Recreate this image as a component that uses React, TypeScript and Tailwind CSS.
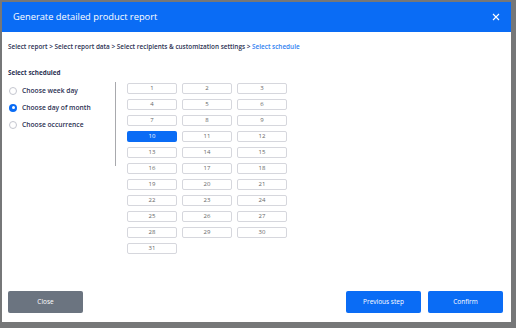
import React from "react";

const days = Array.from({ length: 31 }, (_, i) => i + 1);

function Radio({ label, checked }: { label: string; checked?: boolean }) {
  return (
    <div className="flex items-center gap-[5px] h-[17px]">
      {checked ? (
        <span className="w-[8px] h-[8px] rounded-full bg-[#0a6cf5] flex items-center justify-center">
          <span className="w-[3px] h-[3px] rounded-full bg-white" />
        </span>
      ) : (
        <span className="w-[8px] h-[8px] rounded-full border border-[#c4c6cf] bg-white" />
      )}
      <span className="text-[6.7px] font-semibold text-[#2b3052]">{label}</span>
    </div>
  );
}

export default function App() {
  return (
    <div
      className="w-[516px] h-[328px] bg-[#767778] pl-[2px] pt-[2px]"
      style={{ fontFamily: '"Open Sans", sans-serif' }}
    >
      <div className="w-[509px] h-[320px] bg-white flex flex-col">
        <div className="h-[30px] bg-[#0a6cf5] flex items-center justify-between pl-[11px] pr-[11px]">
          <span className="text-[9.3px] text-white">Generate detailed product report</span>
          <svg width="8" height="8" viewBox="0 0 8 8" className="text-white">
            <path d="M1 1L7 7M7 1L1 7" stroke="currentColor" strokeWidth="1.1" />
          </svg>
        </div>

        <div className="flex-1 px-[6px]">
          <div className="mt-[10px] text-[6.4px] font-semibold text-[#2b3052]">
            Select report &gt; Select report data &gt; Select recipients &amp; customization settings &gt;{" "}
            <span className="text-[#2f80f0]">Select schedule</span>
          </div>

          <div className="mt-[16px] text-[6.3px] font-bold text-[#2b3052]">Select scheduled</div>

          <div className="flex mt-[3px]">
            <div className="w-[107px] pt-[2px] pl-[1px]">
              <Radio label="Choose week day" />
              <Radio label="Choose day of month" checked />
              <Radio label="Choose occurrence" />
            </div>
            <div className="w-px h-[84px] bg-[#a8a9ad] mt-[2px]" />
            <div className="ml-[11px] mt-[3px] grid grid-cols-[50px_50px_50px] gap-x-[5px] gap-y-[5px] h-fit">
              {days.map((d) =>
                d === 10 ? (
                  <div
                    key={d}
                    className="h-[11px] rounded-[2px] bg-[#0a6cf5] text-white text-[6px] flex items-center justify-center"
                  >
                    {d}
                  </div>
                ) : (
                  <div
                    key={d}
                    className="h-[11px] rounded-[2px] border border-[#d6d7dd] text-[#666] text-[6px] flex items-center justify-center"
                  >
                    {d}
                  </div>
                )
              )}
            </div>
          </div>
        </div>

        <div className="flex items-center justify-between pl-[6px] pr-[8px] pb-[9px]">
          <div className="w-[75px] h-[22px] rounded-[2px] bg-[#6b7480] text-white text-[6.5px] flex items-center justify-center">
            Close
          </div>
          <div className="flex gap-[7px]">
            <div className="w-[75px] h-[22px] rounded-[2px] bg-[#0a6cf5] text-white text-[6.5px] flex items-center justify-center">
              Previous step
            </div>
            <div className="w-[75px] h-[22px] rounded-[2px] bg-[#0a6cf5] text-white text-[6.5px] flex items-center justify-center">
              Confirm
            </div>
          </div>
        </div>
      </div>
    </div>
  );
}
